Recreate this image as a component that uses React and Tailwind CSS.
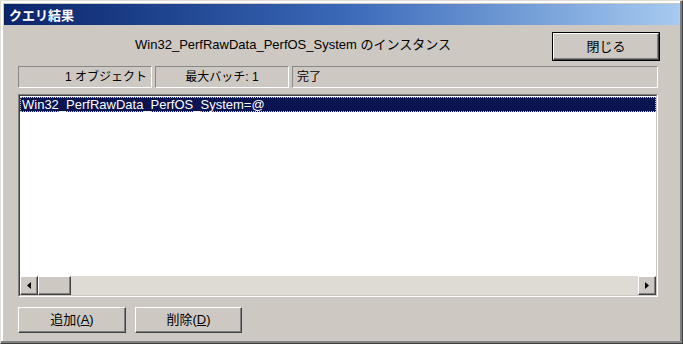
import { useState } from 'react'

const FONT = { fontFamily: '"Liberation Sans", "Noto Sans CJK JP", sans-serif' }

function Btn({ children, isDefault = false, className = '' }) {
  return (
    <button
      type="button"
      className={`flex items-center justify-center bg-[#cdc9c2] text-[13px] text-black ${
        isDefault ? 'border border-black' : ''
      } ${className}`}
    >
      <span className="flex h-full w-full items-center justify-center border-t border-l border-t-white border-l-white border-b border-r border-b-[#404040] border-r-[#404040] shadow-[inset_-1px_-1px_0_#808080]">
        {children}
      </span>
    </button>
  )
}

function Field({ children, align = 'text-left' }) {
  return (
    <div
      className={`h-[22px] truncate border border-t-[#8a8782] border-l-[#8a8782] border-b-white border-r-white px-1 text-[12px] leading-[20px] ${align}`}
    >
      {children}
    </div>
  )
}

function Arrow({ dir }) {
  return (
    <div className="flex h-[19px] w-[18px] shrink-0 items-center justify-center border border-t-white border-l-white border-b-[#404040] border-r-[#404040] bg-[#cdc9c2] shadow-[inset_-1px_-1px_0_#808080]">
      <svg width="4" height="7" viewBox="0 0 4 7">
        {dir === 'left' ? <path d="M4 0 L0 3.5 L4 7 Z" fill="#000" /> : <path d="M0 0 L4 3.5 L0 7 Z" fill="#000" />}
      </svg>
    </div>
  )
}

export default function App() {
  const [selected] = useState(0)
  const rows = ['Win32_PerfRawData_PerfOS_System=@']

  return (
    <div className="h-[344px] w-[683px] overflow-hidden bg-white" style={FONT}>
      <div className="flex h-[344px] w-[683px] flex-col border border-t-[#e0ddd7] border-l-[#e0ddd7] border-b-[#404040] border-r-[#404040] bg-[#cdc9c2] shadow-[inset_-2px_-2px_0_#808080,inset_2px_2px_0_#ffffff]">
        <div className="mx-[3px] mt-[3px] flex h-[21px] items-center bg-gradient-to-r from-[#0a246a] via-[#3a68b8] to-[#a6caf0] pl-[5px]">
          <span className="text-[13px] font-bold text-white" style={{ fontFamily: '"Noto Sans CJK JP", sans-serif' }}>
            クエリ結果
          </span>
        </div>

        <div className="flex flex-col px-[17px] pt-[7px]">
          <div className="flex h-[30px] items-start">
            <div className="flex-1 pl-[16px] pt-[3px] text-center text-[13px]">
              Win32_PerfRawData_PerfOS_System のインスタンス
            </div>
            <Btn isDefault className="mr-[5px] h-[29px] w-[108px]">
              閉じる
            </Btn>
          </div>

          <div className="mt-[4px] grid grid-cols-[134px_134px_1fr] gap-[3px] pr-[7px]">
            <Field align="text-right">1 オブジェクト</Field>
            <Field align="text-center">最大バッチ: 1</Field>
            <Field>完了</Field>
          </div>

          <div className="mt-[6px] mr-[7px] flex h-[203px] flex-col border border-t-[#808080] border-l-[#808080] border-b-white border-r-white">
            <div className="flex flex-1 flex-col border border-t-[#404040] border-l-[#404040] border-b-[#cdc9c2] border-r-[#cdc9c2] bg-white">
              <div className="flex-1 pt-[1px]">
                {rows.map((r, i) => (
                  <div
                    key={r}
                    className={`h-[15px] px-[1px] text-[13px] leading-[13px] ${
                      i === selected ? 'border border-dotted border-[#cdc9c2] bg-[#0a1450] text-white' : ''
                    }`}
                  >
                    {r}
                  </div>
                ))}
              </div>
              <div className="flex h-[19px] items-stretch bg-[#e6e3de]">
                <Arrow dir="left" />
                <div className="h-[19px] w-[33px] shrink-0 border border-t-white border-l-white border-b-[#404040] border-r-[#404040] bg-[#cdc9c2] shadow-[inset_-1px_-1px_0_#808080]" />
                <div className="flex-1 bg-[#dedbd5]" />
                <Arrow dir="right" />
              </div>
            </div>
          </div>

          <div className="mt-[10px] flex gap-[9px]">
            <Btn className="h-[26px] w-[108px]">
              追加(<span className="underline">A</span>)
            </Btn>
            <Btn className="h-[26px] w-[107px]">
              削除(<span className="underline">D</span>)
            </Btn>
          </div>
        </div>
      </div>
    </div>
  )
}
